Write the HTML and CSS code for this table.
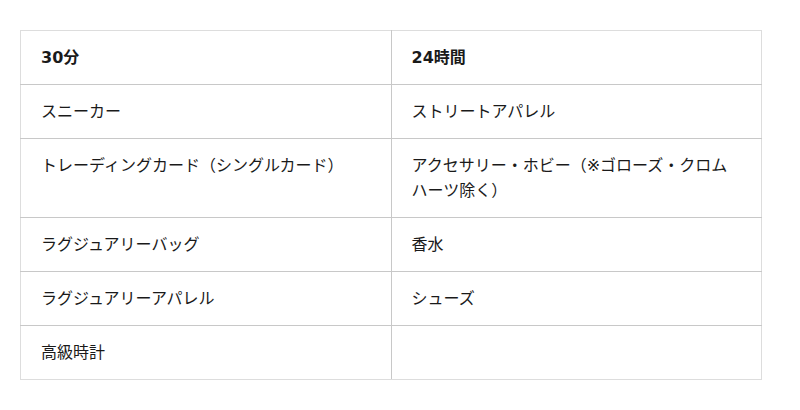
FILE: index.html
```html
<!DOCTYPE html>
<html lang="ja">
<head>
<meta charset="utf-8">
<link rel="stylesheet" href="styles.css">
</head>
<body>
<table class="tbl">
  <thead>
    <tr><th class="cell">30分</th><th class="cell">24時間</th></tr>
  </thead>
  <tbody>
    <tr><td class="cell">スニーカー</td><td class="cell">ストリートアパレル</td></tr>
    <tr><td class="cell">トレーディングカード（シングルカード）</td><td class="cell">アクセサリー・ホビー（※ゴローズ・クロムハーツ除く）</td></tr>
    <tr><td class="cell">ラグジュアリーバッグ</td><td class="cell">香水</td></tr>
    <tr><td class="cell">ラグジュアリーアパレル</td><td class="cell">シューズ</td></tr>
    <tr><td class="cell">高級時計</td><td class="cell"></td></tr>
  </tbody>
</table>
</body>
</html>
```
FILE: styles.css
```css
html, body { background: #fff; }
body {
  margin: 30px 20px;
  font-family: "DejaVu Sans", "Noto Sans CJK JP", sans-serif;
  font-size: 16px;
  color: #1a1a1a;
}
.tbl {
  width: 742px;
  border-collapse: collapse;
  table-layout: fixed;
  border: 1px solid #ddd;
}
.cell {
  text-align: left;
  vertical-align: top;
  padding: 14px 20px;
  line-height: 25px;
  height: 53px;
  box-sizing: border-box;
  border-bottom: 1px solid #c8c8c8;
  border-right: 1px solid #c8c8c8;
}
.cell:last-child { border-right: 1px solid #ddd; }
tbody tr:last-child .cell { border-bottom: 1px solid #ddd; }
th.cell { font-weight: bold; }
```
